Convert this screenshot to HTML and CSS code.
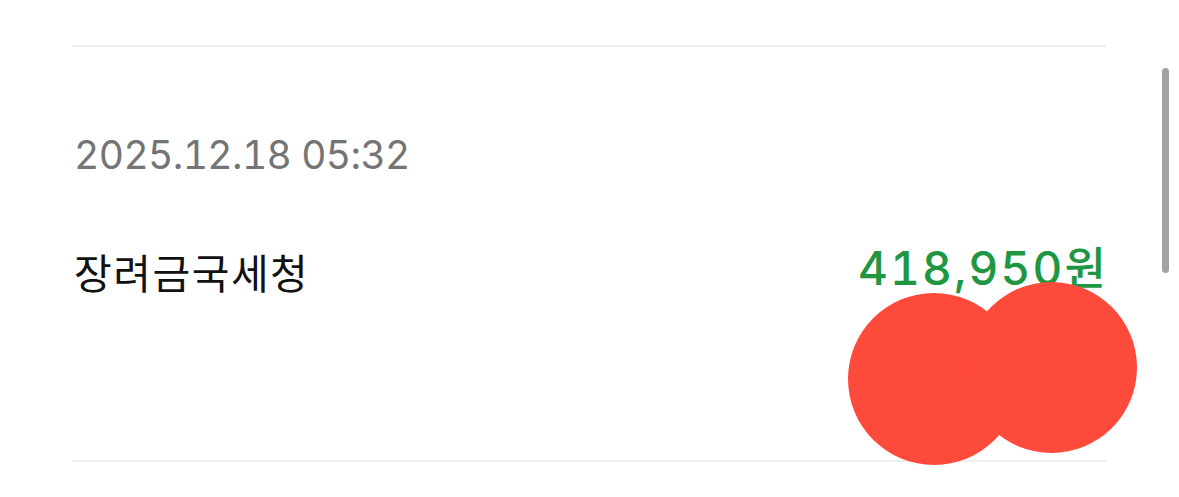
FILE: index.html
```html
<!DOCTYPE html>
<html lang="ko">
<head>
<meta charset="utf-8">
<link rel="stylesheet" href="styles.css">
</head>
<body>
<div class="page">
  <div class="item">
    <div class="date">2025.12.18 05:32</div>
    <div class="row">
      <div class="title">장려금국세청</div>
      <div class="amount">418,950<span class="won">원</span></div>
    </div>
  </div>
  <div class="redact">
    <span class="blob blob-a"></span>
    <span class="blob blob-b"></span>
  </div>
  <div class="scrollbar"></div>
</div>
</body>
</html>
```

FILE: styles.css
```css
html, body {
  margin: 0;
  padding: 0;
  background: #ffffff;
}
body {
  font-family: Inter, "Noto Sans CJK KR", sans-serif;
}
.page {
  position: relative;
  width: 1179px;
  height: 497px;
  overflow: hidden;
  padding: 45px 73px 0 72px;
  box-sizing: border-box;
}
.item {
  border-top: 2px solid #eeeeee;
  border-bottom: 2px solid #eeeeee;
  height: 417px;
  box-sizing: border-box;
  padding: 84px 0 0 2px;
  display: flex;
  flex-direction: column;
}
.date {
  font-size: 39px;
  line-height: 48px;
  color: #747474;
  font-feature-settings: "tnum" 1;
  letter-spacing: -0.6px;
}
.row {
  margin-top: 66px;
  display: flex;
  justify-content: space-between;
  align-items: flex-start;
}
.title {
  font-family: "Noto Sans CJK KR", sans-serif;
  font-size: 41px;
  color: #111111;
  line-height: 56px;
  letter-spacing: 1.5px;
  margin-top: -2px;
}
.amount {
  font-size: 46px;
  font-weight: 500;
  color: #1f9641;
  line-height: 40px;
  font-feature-settings: "tnum" 1;
  letter-spacing: 2.2px;
  margin-top: 1px;
}
.won {
  font-family: "Noto Sans CJK KR", sans-serif;
  font-weight: 500;
  letter-spacing: 0;
  font-size: 45px;
}
.redact {
  position: absolute;
  left: 848px;
  top: 282px;
  width: 291px;
  height: 184px;
}
.blob {
  position: absolute;
  border-radius: 50%;
  background: #fe4a3b;
}
.blob-a {
  left: 0;
  top: 11px;
  width: 172px;
  height: 172px;
}
.blob-b {
  left: 118px;
  top: 0;
  width: 171px;
  height: 171px;
}
.scrollbar {
  position: absolute;
  left: 1162px;
  top: 68px;
  width: 7px;
  height: 205px;
  border-radius: 4px;
  background: #a3a3a3;
}
```
